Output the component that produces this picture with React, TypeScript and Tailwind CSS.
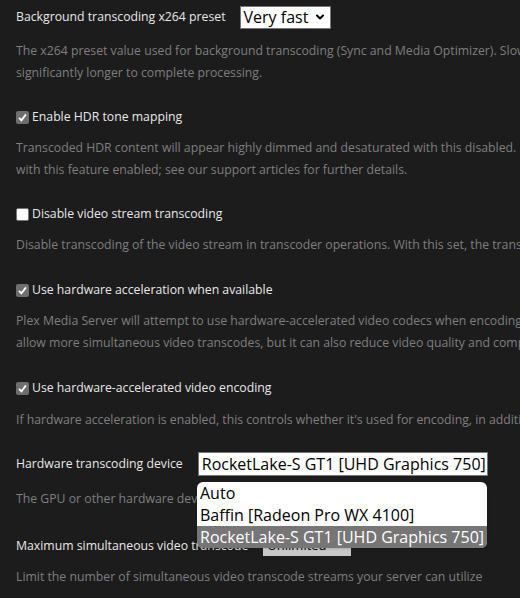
import { ChevronDown } from "lucide-react";

function Box({ checked }: { checked: boolean }) {
  if (!checked)
    return <span className="inline-block w-[13px] h-[13px] bg-white border border-[#767676] rounded-[2px] mr-[3px]" />;
  return (
    <span className="inline-flex items-center justify-center w-[13px] h-[13px] bg-[#6e6e6e] rounded-[2px] mr-[3px]">
      <svg viewBox="0 0 12 12" className="w-[11px] h-[11px]">
        <path d="M2.2 6.4 L4.8 9 L9.8 2.6" stroke="white" strokeWidth="2" fill="none" />
      </svg>
    </span>
  );
}

function Check({ label, checked }: { label: string; checked: boolean }) {
  return (
    <div className="flex items-center h-[20px] text-[12.25px] text-[#e8e8e8]">
      <Box checked={checked} />
      {label}
    </div>
  );
}

function Desc({ children }: { children: React.ReactNode }) {
  return <p className="text-[12.25px] leading-[22px] text-[#7f7f7f] whitespace-nowrap">{children}</p>;
}

export default function App() {
  return (
    <div className="w-[520px] h-[598px] overflow-hidden bg-[#1c1c1c] pl-[16px] font-['Open_Sans',sans-serif]">
      <div className="flex items-center pt-[5px] h-[29px] text-[12.25px] text-[#e8e8e8]">
        <span>Background transcoding x264 preset</span>
        <div className="ml-[14px] flex items-center w-[91px] h-[23px] bg-white border border-[#767676] pl-[3px] pr-[4px] text-[16px] text-black">
          <span className="flex-1">Very fast</span>
          <ChevronDown size={12} strokeWidth={4} />
        </div>
      </div>
      <div className="mt-[11px]">
        <Desc>The x264 preset value used for background transcoding (Sync and Media Optimizer). Slower values will result in better video quality but take</Desc>
        <Desc>significantly longer to complete processing.</Desc>
      </div>

      <div className="mt-[23px]">
        <Check label="Enable HDR tone mapping" checked />
      </div>
      <div className="mt-[10px]">
        <Desc>Transcoded HDR content will appear highly dimmed and desaturated with this disabled. Hardware tone mapping may be used</Desc>
        <Desc>with this feature enabled; see our support articles for further details.</Desc>
      </div>

      <div className="mt-[23px]">
        <Check label="Disable video stream transcoding" checked={false} />
      </div>
      <div className="mt-[10px]">
        <Desc>Disable transcoding of the video stream in transcoder operations. With this set, the transcoder will only copy video streams.</Desc>
      </div>

      <div className="mt-[24px]">
        <Check label="Use hardware acceleration when available" checked />
      </div>
      <div className="mt-[10px]">
        <Desc>Plex Media Server will attempt to use hardware-accelerated video codecs when encoding and decoding video. Hardware acceleration can</Desc>
        <Desc>allow more simultaneous video transcodes, but it can also reduce video quality and compatibility.</Desc>
      </div>

      <div className="mt-[24px]">
        <Check label="Use hardware-accelerated video encoding" checked />
      </div>
      <div className="mt-[11px]">
        <Desc>If hardware acceleration is enabled, this controls whether it's used for encoding, in addition to decoding.</Desc>
      </div>

      <div className="relative mt-[21px] flex items-center h-[24px] text-[12.25px] text-[#e8e8e8]">
        <span>Hardware transcoding device</span>
        <div className="ml-[15px] flex items-center w-[290px] h-[24px] bg-white border border-[#767676] pl-[3px] pr-[2px] text-[16px] text-black">
          <span className="flex-1 whitespace-nowrap">RocketLake-S GT1 [UHD Graphics 750]</span>
          <ChevronDown size={12} strokeWidth={4} />
        </div>
        <div className="absolute left-[181px] top-[30px] w-[290px] bg-white rounded-[6px] overflow-hidden text-[16px] leading-[22px] text-black whitespace-nowrap z-10 shadow">
          <div className="px-[3px]">Auto</div>
          <div className="px-[3px]">Baffin [Radeon Pro WX 4100]</div>
          <div className="px-[3px] bg-[#767676] text-white">RocketLake-S GT1 [UHD Graphics 750]</div>
        </div>
      </div>
      <div className="mt-[12px]">
        <Desc>The GPU or other hardware device used for hardware-accelerated transcoding.</Desc>
      </div>

      <div className="mt-[26px] flex items-center h-[20px] text-[12.25px] text-[#e8e8e8]">
        <span>Maximum simultaneous video transcode</span>
        <div className="ml-[15px] flex items-center w-[88px] h-[20px] bg-[#c8c8c8] text-[13px] text-black pl-[4px]">Unlimited</div>
      </div>
      <div className="mt-[10px]">
        <Desc>Limit the number of simultaneous video transcode streams your server can utilize</Desc>
      </div>
    </div>
  );
}
